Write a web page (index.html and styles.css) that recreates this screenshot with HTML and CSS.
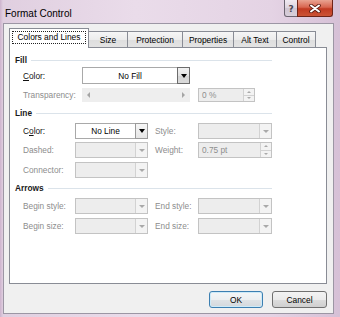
FILE: index.html
```html
<!DOCTYPE html>
<html>
<head>
<meta charset="utf-8">
<title>Format Control</title>
<link rel="stylesheet" href="styles.css">
</head>
<body>
<div class="window">
  <div class="titlebar">
    <span class="title">Format Control</span>
    <div class="caption-btns">
      <div class="cbtn help">?</div>
      <div class="cbtn close">
        <svg width="12" height="9" viewBox="0 0 12 9">
          <path d="M2 1.5 L10 7.5 M10 1.5 L2 7.5" stroke="#5b1c12" stroke-width="3.6" stroke-linecap="round"/>
          <path d="M2 1.5 L10 7.5 M10 1.5 L2 7.5" stroke="#ffffff" stroke-width="2" stroke-linecap="round"/>
        </svg>
      </div>
    </div>
  </div>
  <div class="client">
    <div class="tabs">
      <div class="tab active"><span class="focus">Colors and Lines</span></div>
      <div class="tab t-size">Size</div>
      <div class="tab t-prot">Protection</div>
      <div class="tab t-prop">Properties</div>
      <div class="tab t-alt">Alt Text</div>
      <div class="tab t-ctrl">Control</div>
    </div>
    <div class="panel">
      <div class="hdr h-fill"><span>Fill</span><i class="rule"></i></div>
      <div class="row h17 m2">
        <span class="lbl w59"><u>C</u>olor:</span>
        <div class="combo white w108"><span class="val">No Fill</span><span class="dd btn-dark"><i class="tri"></i></span></div>
      </div>
      <div class="row h14 m4">
        <span class="lbl dis w59">Transparency:</span>
        <div class="slider w108"><i class="tri-l"></i><i class="tri-r"></i></div>
        <div class="spin w57 gap8"><span class="txt">0 %</span><span class="arrows"><span><i class="up"></i></span><span><i class="down"></i></span></span></div>
      </div>

      <div class="hdr h-line"><span>Line</span><i class="rule"></i></div>
      <div class="row h16 m5">
        <span class="lbl w52">C<u>o</u>lor:</span>
        <div class="combo white w73"><span class="val">No Line</span><span class="dd btn-light"><i class="tri"></i></span></div>
        <span class="lbl dis w43 gap7">Style:</span>
        <div class="combo dis w74"><span class="val"></span><span class="dd"><i class="tri"></i></span></div>
      </div>
      <div class="row h16 m3">
        <span class="lbl dis w52">Dashed:</span>
        <div class="combo dis w73"><span class="val"></span><span class="dd"><i class="tri"></i></span></div>
        <span class="lbl dis w43 gap7">Weight:</span>
        <div class="spin w74"><span class="txt">0.75 pt</span><span class="arrows"><span><i class="up"></i></span><span><i class="down"></i></span></span></div>
      </div>
      <div class="row h16 m4">
        <span class="lbl dis w52">Connector:</span>
        <div class="combo dis w73"><span class="val"></span><span class="dd"><i class="tri"></i></span></div>
      </div>

      <div class="hdr h-arrows"><span>Arrows</span><i class="rule"></i></div>
      <div class="row h16 m5">
        <span class="lbl dis w52">Begin style:</span>
        <div class="combo dis w73"><span class="val"></span><span class="dd"><i class="tri"></i></span></div>
        <span class="lbl dis w43 gap7">End style:</span>
        <div class="combo dis w74"><span class="val"></span><span class="dd"><i class="tri"></i></span></div>
      </div>
      <div class="row h16 m4">
        <span class="lbl dis w52">Begin size:</span>
        <div class="combo dis w73"><span class="val"></span><span class="dd"><i class="tri"></i></span></div>
        <span class="lbl dis w43 gap7">End size:</span>
        <div class="combo dis w74"><span class="val"></span><span class="dd"><i class="tri"></i></span></div>
      </div>
    </div>
    <div class="footer">
      <div class="btn ok">OK</div>
      <div class="btn cancel">Cancel</div>
    </div>
  </div>
</div>
</body>
</html>
```
FILE: styles.css
```css
* { box-sizing: border-box; margin: 0; padding: 0; }
html, body { width: 340px; height: 317px; overflow: hidden; }
body {
  font-family: "Liberation Sans", Arial, sans-serif;
  font-size: 8.3px;
  color: #000;
  background: #dccbdc;
}
i { display: block; font-style: normal; }

.window {
  width: 340px;
  height: 317px;
  display: flex;
  flex-direction: column;
  padding: 0 6px 3px 3px;
  background: linear-gradient(to right, #cdb3cd 0, #e0cfe0 3px, #eadcea 40%, #e4d3e4 80%, #d6c0d6 100%);
}

.titlebar {
  height: 23px;
  display: flex;
  justify-content: space-between;
  align-items: flex-start;
}
.title {
  font-size: 10px;
  line-height: 10px;
  margin-top: 9px;
  padding-left: 2px;
  color: #000;
}
.caption-btns { display: flex; margin-right: 1px; }
.cbtn {
  height: 17px;
  border: 1px solid #6b6470;
  border-top: none;
  display: flex;
  align-items: center;
  justify-content: center;
}
.help {
  width: 14px;
  border-radius: 0 0 0 3px;
  background: linear-gradient(#f1eaf2, #ddd3de 50%, #cfc4d1 51%, #d8cfda);
  font-family: "DejaVu Sans", sans-serif;
  font-weight: bold;
  font-size: 9px;
  color: #4a4652;
  padding-top: 1px;
}
.close {
  width: 36px;
  margin-left: -1px;
  border-color: #6e2418;
  border-radius: 0 0 3px 0;
  background: linear-gradient(#e9a391, #d86650 45%, #c13a22 55%, #cc5436);
  padding-top: 1px;
}

.client {
  flex: 1;
  display: flex;
  flex-direction: column;
  border: 1px solid #9c96a4;
  background: #f0f0f0;
  padding: 4px 6px 0 5px;
}

.tabs {
  display: flex;
  align-items: flex-end;
  height: 19px;
  position: relative;
  z-index: 1;
}
.tab {
  height: 16px;
  margin-left: -1px;
  border: 1px solid #898c95;
  border-bottom: none;
  background: linear-gradient(#f6f6f6, #ececec 50%, #dedede 51%, #e3e3e3);
  display: flex;
  align-items: center;
  justify-content: center;
  font-size: 8.4px;
  padding-top: 1px;
}
.tab.active {
  width: 80px;
  height: 20px;
  margin-left: 0;
  margin-bottom: -1px;
  background: #fff;
  position: relative;
  z-index: 2;
  align-items: flex-start;
  padding-top: 2px;
}
.focus {
  display: block;
  width: 74px;
  height: 13px;
  line-height: 11px;
  text-align: center;
  border: 1px dotted #222;
}
.t-size { width: 40px; }
.t-prot { width: 56px; }
.t-prop { width: 52px; }
.t-alt { width: 44px; }
.t-ctrl { width: 40px; }

.panel {
  height: 237px;
  border: 1px solid #898c95;
  background: #fff;
  display: flex;
  flex-direction: column;
  padding-left: 5px;
}

.hdr {
  display: flex;
  align-items: center;
  height: 10px;
  width: 257px;
  font-weight: bold;
  color: #1a1a1a;
}
.hdr .rule { flex: 1; height: 1px; background: #dbe3ea; margin-left: 4px; }
.h-fill { margin-top: 7px; }
.h-line { margin-top: 6px; }
.h-arrows { margin-top: 5px; }

.row { display: flex; align-items: center; padding-left: 8px; }
.h14 { height: 14px; }
.h16 { height: 16px; }
.h17 { height: 17px; }
.m2 { margin-top: 2px; }
.m3 { margin-top: 3px; }
.m4 { margin-top: 4px; }
.m5 { margin-top: 5px; }

.lbl { color: #111; white-space: nowrap; }
.lbl.dis { color: #8d8d8d; }
.w43 { width: 43px; }
.w52 { width: 52px; }
.w57 { width: 57px; }
.w59 { width: 59px; }
.w73 { width: 73px; }
.w74 { width: 74px; }
.w108 { width: 108px; }
.gap7 { margin-left: 7px; }
.gap8 { margin-left: 8px; }

.combo {
  height: 100%;
  display: flex;
  border: 1px solid #c3c3c3;
  background: #ededed;
}
.combo.white { background: #fff; border-color: #a9a9a9; }
.combo .val {
  flex: 1;
  display: flex;
  align-items: center;
  justify-content: center;
  color: #000;
}
.dd {
  width: 12px;
  display: flex;
  align-items: center;
  justify-content: center;
  border-left: 1px solid #d2d2d2;
  background: #f3f3f3;
}
.dd .tri {
  width: 0;
  height: 0;
  border-left: 3px solid transparent;
  border-right: 3px solid transparent;
  border-top: 3px solid #a9a9a9;
}
.dd.btn-dark, .dd.btn-light {
  width: 13px;
  margin: -1px -1px -1px 0;
  border: 1px solid #6c6c6c;
  background: linear-gradient(#f2f2f2, #e2e2e2 50%, #d4d4d4 51%, #dadada);
}
.dd.btn-light { border-color: #9a9a9a; background: linear-gradient(#f6f6f6, #e6e6e6); }
.dd.btn-dark .tri, .dd.btn-light .tri {
  border-top-color: #000;
  border-top-width: 4px;
  border-left-width: 3.5px;
  border-right-width: 3.5px;
}

.slider {
  height: 100%;
  background: #eeeeee;
  display: flex;
  align-items: center;
  justify-content: space-between;
  padding: 0 5px;
}
.tri-l, .tri-r {
  width: 0;
  height: 0;
  border-top: 3px solid transparent;
  border-bottom: 3px solid transparent;
}
.tri-l { border-right: 3px solid #a5a5a5; }
.tri-r { border-left: 3px solid #a5a5a5; }

.spin {
  height: 100%;
  display: flex;
  border: 1px solid #c3c3c3;
  background: #ededed;
}
.spin .txt {
  flex: 1;
  display: flex;
  align-items: center;
  padding-left: 3px;
  color: #8d8d8d;
}
.spin .arrows {
  width: 11px;
  display: flex;
  flex-direction: column;
  border-left: 1px solid #d2d2d2;
  background: #f3f3f3;
}
.spin .arrows > span {
  flex: 1;
  display: flex;
  align-items: center;
  justify-content: center;
}
.spin .arrows > span + span { border-top: 1px solid #d2d2d2; }
.up, .down {
  width: 0;
  height: 0;
  border-left: 2px solid transparent;
  border-right: 2px solid transparent;
}
.up { border-bottom: 2px solid #a9a9a9; }
.down { border-top: 2px solid #a9a9a9; }

.footer {
  display: flex;
  justify-content: flex-end;
  gap: 9px;
  margin-top: 7px;
}
.btn {
  height: 17px;
  border: 1px solid #707070;
  border-radius: 3px;
  background: linear-gradient(#f3f3f3, #ebebeb 50%, #dddddd 51%, #cfcfcf);
  display: flex;
  align-items: center;
  justify-content: center;
  font-size: 8.4px;
  color: #000;
}
.btn.ok {
  width: 54px;
  border-color: #3c7fb1;
  box-shadow: inset 0 0 0 1px #cdeaf8;
  background: linear-gradient(#f4f6f7, #eceff1 50%, #dfe3e6 51%, #d3d8dc);
}
.btn.cancel { width: 55px; }
```
